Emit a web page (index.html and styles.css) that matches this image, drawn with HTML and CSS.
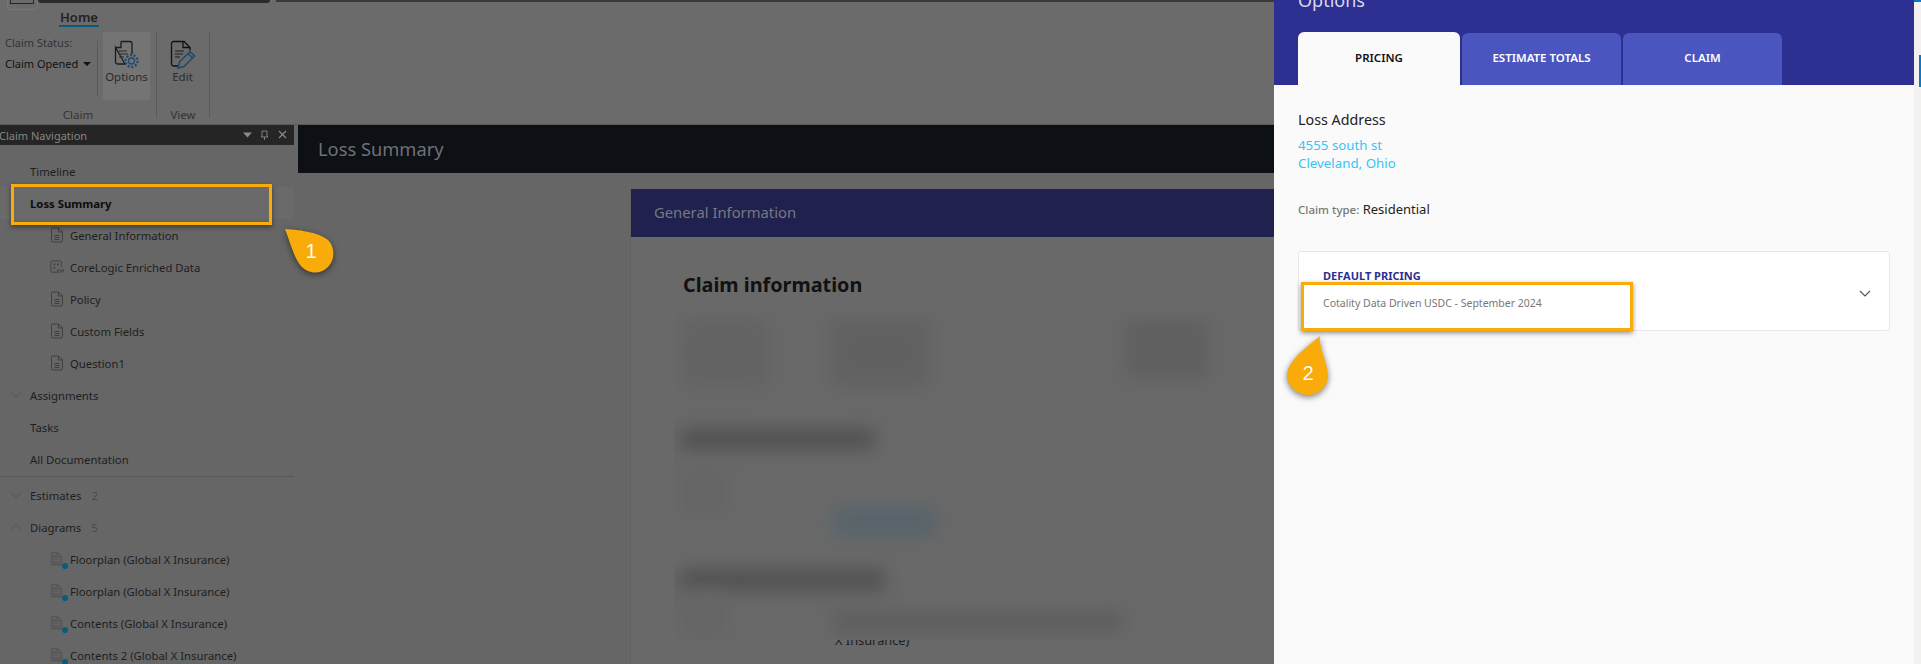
FILE: index.html
```html
<!DOCTYPE html>
<html lang="en">
<head>
    <meta charset="UTF-8">
    <meta name="viewport" content="width=device-width, initial-scale=1.0">
    <title>Claim Options</title>
    <link rel="stylesheet" href="styles.css">
</head>
<body>
    <svg class="defs" width="0" height="0">
        <symbol id="doc" viewBox="0 0 14 16">
            <path d="M1.5 2.5a1.5 1.5 0 0 1 1.5-1.5h5.5l4 4v8.5a1.5 1.5 0 0 1-1.5 1.5H3a1.5 1.5 0 0 1-1.5-1.5z M8.5 1v4h4 M4.5 8.5h5 M4.5 10.5h5 M4.5 12.5h5" fill="none" stroke="#3f3f3f" stroke-width="1"/>
        </symbol>
        <symbol id="diagram" viewBox="0 0 14 16">
            <path d="M1.5 1h6.5l4.5 4.5V14a1 1 0 0 1-1 1H1.500a1 1 0 0 1-1-1V2a1 1 0 0 1 1-1z" fill="#5a5a5a"/>
            <path d="M3 7.500h7 M3 9.500h7 M3 3.500h3" stroke="#666" stroke-width="1"/>
        </symbol>
    </svg>

    <div class="page">
        <div class="app">
            <header class="ribbon">
                <div class="titlebar">
                    <div class="logo"><span class="logo-mark"></span></div>
                    <div class="titlebar-search"></div>
                    <div class="titlebar-rest"></div>
                </div>
                <div class="ribbon-tab">Home</div>
                <div class="ribbon-groups">
                    <div class="ribbon-group group-claim">
                        <div class="group-body">
                            <div class="status">
                                <div class="status-label">Claim Status:</div>
                                <div class="status-value">Claim Opened <span class="caret"></span></div>
                            </div>
                            <div class="ribbon-btn ribbon-btn-active">
                                <svg width="26" height="30" viewBox="0 0 26 30">
                                    <path d="M7 1.500h9a2 2 0 0 1 2 2V14 M11 24H3.500a2 2 0 0 1-2-2V7.500z M7 1.500v6H1.500" fill="none" stroke="#1c1c1c" stroke-width="1.300"/>
                                    <path d="M5 11h8 M5 14h9 M5 17h5" stroke="#2a2a2a" stroke-width="1"/>
                                    <circle cx="17.500" cy="21" r="3" fill="none" stroke="#204a6e" stroke-width="1.300"/>
                                    <circle cx="17.500" cy="21" r="6" fill="none" stroke="#204a6e" stroke-width="2.400" stroke-dasharray="2 1.700"/>
                                </svg>
                                <span>Options</span>
                            </div>
                        </div>
                        <div class="group-label">Claim</div>
                    </div>
                    <div class="ribbon-group group-view">
                        <div class="group-body">
                            <div class="ribbon-btn ribbon-btn-edit">
                                <svg width="26" height="30" viewBox="0 0 26 30">
                                    <path d="M10 1.500h4l6 6v3 M9 26H3.500a2 2 0 0 1-2-2V3.500a2 2 0 0 1 2-2H10 M13 1.500v6h7" fill="none" stroke="#111" stroke-width="1.300"/>
                                    <path d="M5 11h9 M5 14h8 M5 17h5" stroke="#1c1c1c" stroke-width="1"/>
                                    <path d="M8 28l1.500-6L20 11.500l4.500 4.500L14 26.500z M18 13.500l4.500 4.500" fill="none" stroke="#204a6e" stroke-width="1.500"/>
                                </svg>
                                <span>Edit</span>
                            </div>
                        </div>
                        <div class="group-label">View</div>
                    </div>
                </div>
            </header>

            <div class="workspace">
                <aside class="nav-pane">
                    <div class="pane-title">
                        <span class="pane-name">Claim Navigation</span>
                        <span class="pane-tools">
                            <svg width="48" height="12" viewBox="0 0 48 12">
                                <path d="M0 3.500h9l-4.500 5z" fill="#8a8a8a"/>
                                <path d="M19 2h5v5l1 1h-7l1-1z M21.500 8v3" fill="none" stroke="#8a8a8a" stroke-width="0.900"/>
                                <path d="M36 2l7 7 M43 2l-7 7" stroke="#8a8a8a" stroke-width="1.200"/>
                            </svg>
                        </span>
                    </div>
                    <ul class="nav-list">
                        <li class="nav-item">Timeline</li>
                        <li class="nav-item nav-selected">Loss Summary</li>
                        <li class="nav-item nav-child"><svg class="nav-icon"><use href="#doc"/></svg>General Information</li>
                        <li class="nav-item nav-child">
                            <svg class="nav-icon" viewBox="0 0 16 16">
                                <path d="M9 14H2a1 1 0 0 1-1-1V2a1 1 0 0 1 1-1h10a1 1 0 0 1 1 1v6" fill="none" stroke="#3f3f3f"/>
                                <path d="M4 4h2v2H4z M8 4h2v2H8z M4 8h2v2H4z" fill="#3f3f3f"/>
                                <path d="M11 11h-1a1.500 1.500 0 0 0 0 3h1 M13 11h1a1.500 1.500 0 0 1 0 3h-1 M10.500 12.500h3.500" fill="none" stroke="#3f3f3f"/>
                            </svg>CoreLogic Enriched Data
                        </li>
                        <li class="nav-item nav-child"><svg class="nav-icon"><use href="#doc"/></svg>Policy</li>
                        <li class="nav-item nav-child"><svg class="nav-icon"><use href="#doc"/></svg>Custom Fields</li>
                        <li class="nav-item nav-child"><svg class="nav-icon"><use href="#doc"/></svg>Question1</li>
                        <li class="nav-item"><svg class="nav-chevron" viewBox="0 0 12 8"><path d="M1 1.500l5 5 5-5"/></svg>Assignments</li>
                        <li class="nav-item">Tasks</li>
                        <li class="nav-item">All Documentation</li>
                        <li class="nav-divider"></li>
                        <li class="nav-item"><svg class="nav-chevron" viewBox="0 0 12 8"><path d="M1 1.500l5 5 5-5"/></svg>Estimates<span class="nav-count">2</span></li>
                        <li class="nav-item"><svg class="nav-chevron" viewBox="0 0 12 8"><path d="M1 6.500l5-5 5 5"/></svg>Diagrams<span class="nav-count">5</span></li>
                        <li class="nav-item nav-child"><span class="diagram-icon"><svg class="nav-icon"><use href="#diagram"/></svg><i class="dot"></i></span>Floorplan (Global X Insurance)</li>
                        <li class="nav-item nav-child"><span class="diagram-icon"><svg class="nav-icon"><use href="#diagram"/></svg><i class="dot"></i></span>Floorplan (Global X Insurance)</li>
                        <li class="nav-item nav-child"><span class="diagram-icon"><svg class="nav-icon"><use href="#diagram"/></svg><i class="dot"></i></span>Contents (Global X Insurance)</li>
                        <li class="nav-item nav-child"><span class="diagram-icon"><svg class="nav-icon"><use href="#diagram"/></svg><i class="dot"></i></span>Contents 2 (Global X Insurance)</li>
                    </ul>
                </aside>

                <main class="main">
                    <div class="main-bar">Loss Summary</div>
                    <section class="info-card">
                        <div class="info-head">General Information</div>
                        <div class="info-body">
                            <h2>Claim information</h2>
                            <div class="redacted">
                                <div class="blur-row blur-row-top">
                                    <div class="blur blur-a"></div>
                                    <div class="blur blur-b"></div>
                                    <div class="blur blur-c"></div>
                                </div>
                                <div class="blur blur-heading"></div>
                                <div class="blur-row blur-row-mid">
                                    <div class="blur blur-small"></div>
                                    <div class="blur blur-blue"></div>
                                </div>
                                <div class="blur blur-heading blur-heading-2"></div>
                                <div class="blur-row blur-row-low">
                                    <div class="blur blur-small"></div>
                                    <div class="blur blur-long"></div>
                                </div>
                            </div>
                            <div class="leftover">X Insurance)</div>
                        </div>
                    </section>
                </main>
            </div>
        </div>

        <div class="options">
            <div class="options-head">
                <div class="options-title">Options</div>
                <div class="tabs">
                    <div class="tab tab-active">PRICING</div>
                    <div class="tab">ESTIMATE TOTALS</div>
                    <div class="tab">CLAIM</div>
                </div>
            </div>
            <div class="options-body">
                <div class="address-title">Loss Address</div>
                <div class="address">4555 south st<br>Cleveland, Ohio</div>
                <div class="claim-type"><span class="claim-type-label">Claim type:</span> Residential</div>
                <div class="pricing-card">
                    <div>
                        <div class="pricing-title">DEFAULT PRICING</div>
                        <div class="pricing-value">Cotality Data Driven USDC - September 2024</div>
                    </div>
                    <svg class="pricing-chevron" width="12" height="8" viewBox="0 0 12 8"><path d="M1 1l5 5 5-5" fill="none" stroke="#555" stroke-width="1.200"/></svg>
                </div>
            </div>
        </div>

        <div class="scroll-strip"><div class="scroll-top"></div><div class="scroll-thumb"></div></div>
    </div>

    <!-- callouts sit on top of everything -->
    <div class="highlight highlight-1"></div>
    <svg class="drop drop-1" width="60" height="58" viewBox="0 0 60 58">
        <path d="M3 2C20 3 39 6 47 14c6 7 6 19-1 26-8 8-20 7-27-1C12 31 8 15 3 2z" fill="#f9ab0a"/>
        <text x="29" y="31" class="drop-num">1</text>
    </svg>
    <div class="highlight highlight-2"></div>
    <svg class="drop drop-2" width="52" height="70" viewBox="0 0 52 70">
        <path d="M38 2C36 12 46 30 46 41c0 11-9 20-20 20S5 52 5 41C6 26 25 13 38 2z" fill="#f9ab0a"/>
        <text x="26" y="46" class="drop-num">2</text>
    </svg>
</body>
</html>
```

FILE: styles.css
```css
body {
    margin: 0;
    width: 1921px;
    height: 664px;
    overflow: hidden;
    position: relative;
    font-family: "Noto Sans", "Open Sans", sans-serif;
    background-color: #666;
}

.defs {
    display: block;
    height: 0;
}

.page {
    display: flex;
    height: 664px;
}

.app {
    width: 1274px;
    flex: none;
    display: flex;
    flex-direction: column;
    background-color: #666;
}

/* ribbon */
.ribbon {
    height: 124px;
    border-bottom: 1px solid #5a5a5a;
    background-color: #6b6b6b;
    flex: none;
}

.titlebar {
    display: flex;
    height: 11px;
}

.logo {
    width: 29px;
    height: 9px;
    margin-left: 7px;
    border: 1px solid #777;
    border-top: none;
    border-radius: 0 0 5px 5px;
    flex: none;
}

.logo-mark {
    display: block;
    width: 22px;
    height: 3px;
    margin-left: 2px;
    border: 1px solid #0f2a44;
    border-top: none;
}

.titlebar-search {
    width: 232px;
    height: 3px;
    background-color: #2b2b2b;
    border-radius: 0 0 3px 3px;
}

.titlebar-rest {
    flex: 1;
    height: 2px;
    margin-left: 6px;
    background-color: #3a3a3a;
}

.ribbon-tab {
    width: 40px;
    height: 12px;
    margin-left: 59px;
    padding-bottom: 2px;
    font-size: 13px;
    font-weight: 600;
    line-height: 12px;
    color: #222;
    text-align: center;
    border-bottom: 2px solid #0a5a7c;
    white-space: nowrap;
}

.ribbon-groups {
    display: flex;
    margin-top: 5px;
    height: 86px;
}

.ribbon-group {
    display: flex;
    flex-direction: column;
    border-right: 1px solid #5a5a5a;
    box-sizing: border-box;
}

.group-claim {
    width: 157px;
}

.group-view {
    width: 53px;
}

.group-body {
    display: flex;
    height: 68px;
}

.group-label {
    font-size: 11.500px;
    line-height: 16px;
    color: #333;
    text-align: center;
    margin-top: 7px;
}

.status {
    width: 92px;
    height: 55px;
    margin-top: 9px;
    padding-left: 5px;
    border-right: 1px solid #5a5a5a;
    flex: none;
    white-space: nowrap;
}

.status-label {
    font-size: 11px;
    line-height: 12px;
    margin-top: -4px;
    color: #333;
}

.status-value {
    font-size: 11px;
    line-height: 14px;
    margin-top: 8px;
    color: #111;
}

.caret {
    display: inline-block;
    margin-left: 2px;
    vertical-align: 2px;
    border-left: 4px solid transparent;
    border-right: 4px solid transparent;
    border-top: 4px solid #111;
}

.ribbon-btn {
    width: 47px;
    height: 68px;
    margin-left: 5px;
    display: flex;
    flex-direction: column;
    align-items: center;
    padding-top: 8px;
    box-sizing: border-box;
    font-size: 11.500px;
    color: #2a2a2a;
}

.ribbon-btn span {
    line-height: 15px;
    margin-top: -1px;
}

.ribbon-btn-active {
    background-color: #747474;
}

.ribbon-btn-edit {
    margin-left: 2px;
}

/* navigation */
.workspace {
    flex: 1;
    display: flex;
    min-height: 0;
}

.nav-pane {
    width: 294px;
    flex: none;
    margin-right: 4px;
    overflow: hidden;
}

.pane-title {
    height: 20px;
    background-color: #252525;
    display: flex;
    align-items: center;
    justify-content: space-between;
    font-size: 11px;
    color: #868686;
}

.pane-name {
    margin-left: -1px;
}

.pane-tools {
    display: flex;
    margin-right: 3px;
}

.nav-list {
    list-style-type: none;
    margin: 0;
    padding: 10px 0 0;
}

.nav-item {
    display: flex;
    align-items: center;
    height: 32px;
    padding-left: 30px;
    position: relative;
    font-size: 11.300px;
    color: #1e1e1e;
    white-space: nowrap;
}

.nav-selected {
    font-weight: 700;
    color: #0d0d0d;
    background-color: #6a6a6a;
}

.nav-child {
    padding-left: 50px;
}

.nav-icon {
    width: 14px;
    height: 16px;
    margin-right: 6px;
    flex: none;
}

.nav-chevron {
    position: absolute;
    left: 10px;
    top: 12px;
    width: 12px;
    height: 8px;
    fill: none;
    stroke: #5c5c5c;
    stroke-width: 1.200;
}

.nav-count {
    margin-left: 10px;
    color: #4a4a4a;
}

.nav-divider {
    height: 1px;
    margin: 1px 0 2px;
    background-color: #565656;
}

.diagram-icon {
    display: flex;
    position: relative;
}

.dot {
    position: absolute;
    left: 12px;
    top: 12px;
    width: 6px;
    height: 6px;
    border-radius: 50%;
    background-color: #0a5a7c;
}

/* main */
.main {
    flex: 1;
    min-width: 0;
    overflow: hidden;
}

.main-bar {
    height: 48px;
    line-height: 47px;
    padding-left: 20px;
    font-size: 18.300px;
    color: #6e7175;
    background-color: #0d1015;
}

.info-card {
    margin: 16px 0 0 332px;
    border-left: 1px solid #606060;
    background-color: #696969;
    height: 480px;
}

.info-head {
    height: 48px;
    line-height: 46px;
    padding-left: 23px;
    font-size: 14.800px;
    color: #78787f;
    background-color: #20214f;
}

.info-body {
    padding: 31px 0 0 52px;
}

.info-body h2 {
    margin: 0;
    font-size: 19.800px;
    line-height: 34px;
    font-weight: 700;
    color: #111;
    white-space: nowrap;
}

.redacted {
    position: relative;
    margin: 9px 0 0 -9px;
    width: 551px;
    height: 329px;
    overflow: hidden;
    background-color: #696969;
}

.blur {
    filter: blur(9px);
    background-color: #5f5f5f;
}

.blur-row {
    display: flex;
}

.blur-row-top {
    height: 76px;
    padding-top: 8px;
}

.blur-a {
    width: 88px;
    height: 68px;
    margin-left: 8px;
    background-color: #636363;
}

.blur-b {
    width: 100px;
    height: 68px;
    margin-left: 60px;
    background-color: #616161;
}

.blur-c {
    width: 85px;
    height: 60px;
    margin-left: 194px;
    background-color: #606060;
}

.blur-heading {
    width: 195px;
    height: 20px;
    margin: 34px 0 0 6px;
    background-color: #505050;
}

.blur-heading-2 {
    width: 205px;
    margin-top: 32px;
}

.blur-row-mid {
    height: 68px;
    margin-top: 21px;
    padding-left: 6px;
}

.blur-small {
    width: 48px;
    height: 45px;
    background-color: #656565;
}

.blur-blue {
    width: 104px;
    height: 30px;
    margin: 37px 0 0 105px;
    background-color: #58646b;
}

.blur-row-low {
    height: 45px;
    margin-top: 2px;
    padding-left: 6px;
}

.blur-long {
    width: 290px;
    height: 20px;
    margin: 20px 0 0 105px;
    background-color: #5d5d5d;
}

.leftover {
    margin: -8px 0 0 152px;
    font-size: 12.800px;
    line-height: 16px;
    color: #1e1e1e;
}

/* options panel */
.options {
    width: 640px;
    flex: none;
    display: flex;
    flex-direction: column;
    background-color: #fafafa;
}

.options-head {
    height: 85px;
    flex: none;
    background-color: #2d2f91;
    display: flex;
    flex-direction: column;
    justify-content: flex-end;
    padding-left: 24px;
    overflow: hidden;
}

.options-title {
    font-size: 18px;
    line-height: 24px;
    margin-bottom: 20px;
    color: #d9d9ee;
    flex: none;
}

.tabs {
    display: flex;
    align-items: flex-end;
    gap: 2px;
    flex: none;
}

.tab {
    width: 159px;
    height: 52px;
    line-height: 50px;
    text-align: center;
    font-size: 11.500px;
    font-weight: 600;
    color: #fff;
    background-color: #4b55c0;
    border-radius: 6px 6px 0 0;
    white-space: nowrap;
}

.tab-active {
    width: 162px;
    height: 53px;
    line-height: 52px;
    color: #111;
    background-color: #fafafa;
}

.options-body {
    padding: 25px 24px 0;
}

.address-title {
    font-size: 14.300px;
    line-height: 20px;
    color: #222;
}

.address {
    margin-top: 6px;
    font-size: 13.300px;
    line-height: 18px;
    color: #36c5f5;
}

.claim-type {
    margin-top: 27px;
    font-size: 13px;
    line-height: 20px;
    color: #222;
}

.claim-type-label {
    font-size: 11.500px;
    font-weight: 500;
    color: #777;
}

.pricing-card {
    display: flex;
    justify-content: space-between;
    align-items: flex-start;
    width: 592px;
    height: 80px;
    margin-top: 31px;
    padding: 17px 18px 0 24px;
    box-sizing: border-box;
    background-color: #fff;
    border: 1px solid #e8e8e8;
    border-radius: 3px;
}

.pricing-title {
    font-size: 11px;
    line-height: 14px;
    font-weight: 700;
    color: #2d2f91;
}

.pricing-value {
    margin-top: 13px;
    font-size: 10.500px;
    line-height: 14px;
    color: #777;
}

.pricing-chevron {
    margin-top: 21px;
}

.scroll-strip {
    flex: 1;
    position: relative;
    background-color: #f2f1f0;
}

.scroll-top {
    height: 2px;
    background-color: #0a78c8;
}

.scroll-thumb {
    width: 2px;
    height: 32px;
    margin: 53px 0 0 5px;
    background-color: #0a78c8;
}

/* callouts */
.highlight {
    position: absolute;
    box-sizing: border-box;
    border: 3px solid #f9ab0a;
    box-shadow: 0 2px 5px rgba(0, 0, 0, 0.45);
}

.highlight-1 {
    left: 11px;
    top: 184px;
    width: 261px;
    height: 41px;
}

.highlight-2 {
    left: 1301px;
    top: 282px;
    width: 332px;
    height: 49px;
}

.drop {
    position: absolute;
    filter: drop-shadow(0 2px 3px rgba(0, 0, 0, 0.5));
}

.drop-1 {
    left: 282px;
    top: 227px;
}

.drop-2 {
    left: 1282px;
    top: 334px;
}

.drop-num {
    font-family: "Liberation Sans", Arial, sans-serif;
    font-size: 20px;
    fill: #fff;
    text-anchor: middle;
}
```
